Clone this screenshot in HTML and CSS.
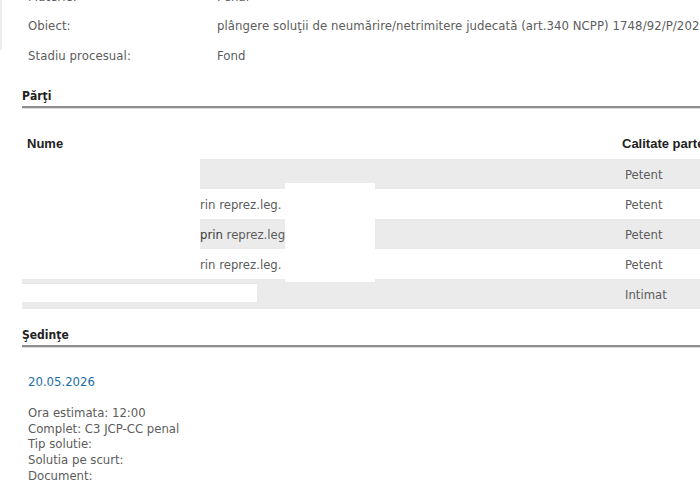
FILE: index.html
```html
<!DOCTYPE html>
<html lang="ro">
<head>
<meta charset="utf-8">
<title>Dosar</title>
<link rel="stylesheet" href="styles.css">
</head>
<body>
<div class="page">
  <div class="edge"></div>
  <div class="info">
    <div class="info-row"><span class="label">Materie:</span><span class="value">Penal</span></div>
    <div class="info-row"><span class="label">Obiect:</span><span class="value">plângere soluţii de neumărire/netrimitere judecată (art.340 NCPP) 1748/92/P/2025</span></div>
    <div class="info-row"><span class="label">Stadiu procesual:</span><span class="value">Fond</span></div>
  </div>

  <h3 class="section">Părţi</h3>

  <div class="parti-wrap">
    <table class="parti">
      <colgroup><col class="col-nume"><col class="col-cal"></colgroup>
      <thead>
        <tr><th class="c-nume">Nume</th><th class="c-cal">Calitate parte</th></tr>
      </thead>
      <tbody>
        <tr class="alt">
          <td class="c-nume"><div class="nume"><span class="redact r1"></span></div></td>
          <td class="c-cal">Petent</td>
        </tr>
        <tr>
          <td class="c-nume"><div class="nume"><span class="redact r2"></span><span class="txt">rin reprez.leg.</span></div></td>
          <td class="c-cal">Petent</td>
        </tr>
        <tr class="alt">
          <td class="c-nume"><div class="nume"><span class="redact r2"></span><span class="txt"><span class="dark">prin</span> reprez.leg</span></div></td>
          <td class="c-cal">Petent</td>
        </tr>
        <tr>
          <td class="c-nume"><div class="nume"><span class="redact r2"></span><span class="txt">rin reprez.leg. .</span></div></td>
          <td class="c-cal">Petent</td>
        </tr>
        <tr class="alt">
          <td class="c-nume"><div class="nume"><span class="redact r5"></span></div></td>
          <td class="c-cal">Intimat</td>
        </tr>
      </tbody>
    </table>
    <div class="cover"></div>
  </div>

  <h3 class="section sec2">Şedinţe</h3>

  <div class="sedinta">
    <div class="date">20.05.2026</div>
    <div class="details">
      <div>Ora estimata: 12:00</div>
      <div>Complet: C3 JCP-CC penal</div>
      <div>Tip solutie:</div>
      <div>Solutia pe scurt:</div>
      <div>Document:</div>
    </div>
  </div>
</div>
</body>
</html>
```

FILE: styles.css
```css
html, body {
  margin: 0;
  padding: 0;
  overflow: hidden;
  background: #ffffff;
}

body {
  font-family: "DejaVu Sans Condensed", "DejaVu Sans", sans-serif;
  font-size: 13px;
  color: #5c5c5c;
}

.page {
  position: relative;
  width: 780px;
  margin-top: -18px;
}

.edge {
  position: absolute;
  left: 0;
  top: 18px;
  width: 2px;
  height: 50px;
  background: #ececec;
}

.info-row {
  display: grid;
  grid-template-columns: 217px auto;
  height: 30px;
  align-items: center;
  white-space: nowrap;
  letter-spacing: 0.08px;
}

.info-row:first-child {
  height: 28px;
}

.label {
  padding-left: 28px;
}

.section {
  margin: 19px 0 0 22px;
  padding: 0 0 2px 0;
  height: 15px;
  font-size: 12px;
  font-weight: bold;
  color: #222222;
  border-bottom: 2px solid #8e8e8e;
  box-shadow: 0 1px 0 #dcdcdc;
}

.sec2 {
  margin-top: 19px;
}

.parti-wrap {
  position: relative;
  margin: 20px 0 0 22px;
}

.parti {
  width: 758px;
  border-collapse: collapse;
  table-layout: fixed;
}

.col-nume {
  width: 600px;
}

.col-cal {
  width: 158px;
}

.parti th {
  font-family: "Liberation Sans", Arial, sans-serif;
  font-size: 13px;
  font-weight: bold;
  color: #222222;
  text-align: left;
  height: 31px;
  padding: 0;
  vertical-align: middle;
  white-space: nowrap;
}

.parti th.c-nume {
  padding-left: 5px;
}

.parti td {
  height: 30px;
  padding: 0;
  vertical-align: middle;
  white-space: nowrap;
}

.parti tr.alt td {
  background: #ebebeb;
}

td.c-cal {
  padding-left: 3px;
}

.nume {
  display: flex;
  align-items: center;
  height: 30px;
}

.redact {
  display: block;
  background: #ffffff;
}

.r1, .r2 {
  width: 178px;
  height: 100%;
}

.r5 {
  width: 235px;
  height: 18px;
  margin-top: -4px;
  border-top: 1px solid #e4e4e4;
}

.dark {
  color: #3a3a3a;
}

.cover {
  position: absolute;
  left: 263px;
  top: 55px;
  width: 90px;
  height: 99px;
  background: #ffffff;
}

.sedinta {
  padding: 27px 0 0 28px;
}

.date {
  color: #1d6ea6;
  line-height: 16px;
}

.details {
  margin-top: 15px;
  line-height: 15.7px;
}
```
